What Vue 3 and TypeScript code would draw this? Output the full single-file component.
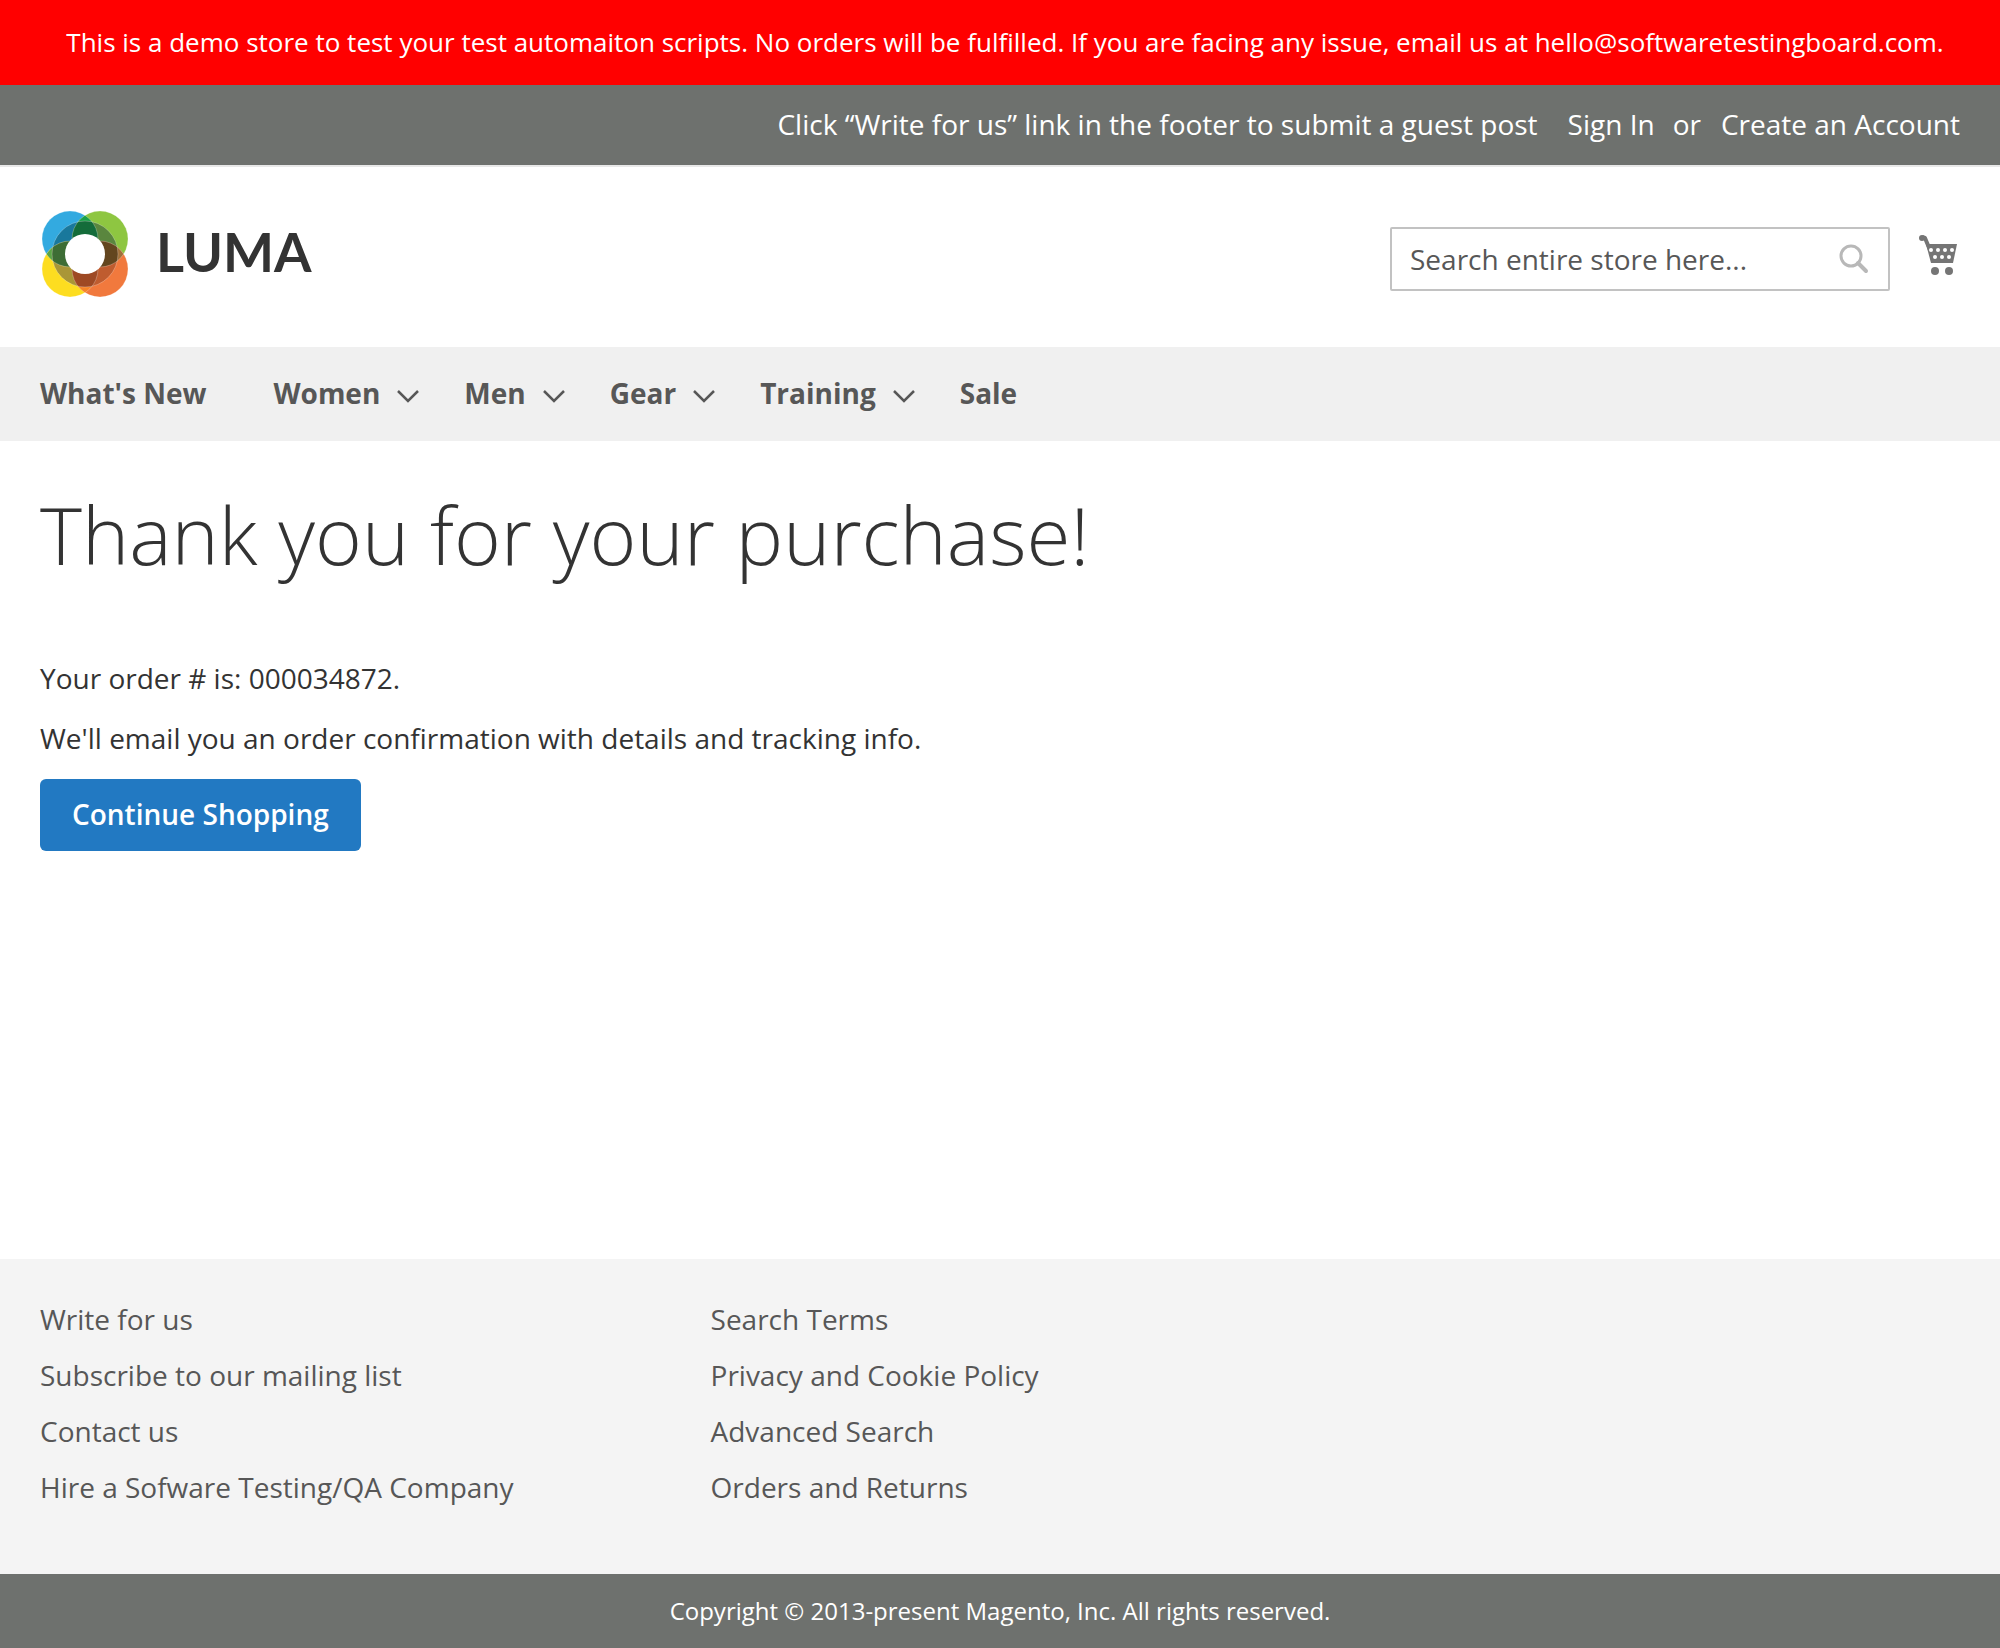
<script setup lang="ts">
interface NavItem {
  label: string
  hasMenu: boolean
}

const navItems: NavItem[] = [
  { label: "What's New", hasMenu: false },
  { label: 'Women', hasMenu: true },
  { label: 'Men', hasMenu: true },
  { label: 'Gear', hasMenu: true },
  { label: 'Training', hasMenu: true },
  { label: 'Sale', hasMenu: false },
]

const footerColumns: string[][] = [
  ['Write for us', 'Subscribe to our mailing list', 'Contact us', 'Hire a Sofware Testing/QA Company'],
  ['Search Terms', 'Privacy and Cookie Policy', 'Advanced Search', 'Orders and Returns'],
]
</script>

<template>
  <div class="page">
    <div class="notice">
      This is a demo store to test your test automaiton scripts. No orders will be fulfilled. If you are facing any issue, email us at hello@softwaretestingboard.com.
    </div>

    <header>
      <div class="panel">
        <span class="welcome">Click “Write for us” link in the footer to submit a guest post</span>
        <a href="#">Sign In</a>
        <span class="or">or</span>
        <a href="#">Create an Account</a>
      </div>

      <div class="masthead">
        <a href="#" class="logo" aria-label="Luma home">
          <svg class="mark" width="88" height="88" viewBox="0 0 88 88" aria-hidden="true">
            <defs>
              <clipPath id="blue"><circle cx="30" cy="29" r="28" /></clipPath>
              <clipPath id="orange"><circle cx="60" cy="59" r="28" /></clipPath>
              <clipPath id="ring"><circle cx="45" cy="44" r="33" /></clipPath>
            </defs>
            <circle cx="30" cy="29" r="28" fill="#33aae0" />
            <circle cx="60" cy="29" r="28" fill="#8ec641" />
            <circle cx="30" cy="59" r="28" fill="#fddd20" />
            <circle cx="60" cy="59" r="28" fill="#f1793d" />
            <g clip-path="url(#blue)">
              <circle cx="60" cy="29" r="28" fill="#1ba04a" />
              <circle cx="30" cy="59" r="28" fill="#5ba345" />
            </g>
            <g clip-path="url(#orange)">
              <circle cx="60" cy="29" r="28" fill="#a0703a" />
              <circle cx="30" cy="59" r="28" fill="#f58428" />
            </g>
            <g clip-path="url(#ring)">
              <circle cx="30" cy="29" r="28" fill="#19789c" />
              <circle cx="60" cy="29" r="28" fill="#5a863e" />
              <circle cx="30" cy="59" r="28" fill="#a99637" />
              <circle cx="60" cy="59" r="28" fill="#bf5c2f" />
              <g clip-path="url(#blue)">
                <circle cx="60" cy="29" r="28" fill="#146c3a" />
                <circle cx="30" cy="59" r="28" fill="#3d6d35" />
              </g>
              <g clip-path="url(#orange)">
                <circle cx="60" cy="29" r="28" fill="#63461f" />
                <circle cx="30" cy="59" r="28" fill="#9e4924" />
              </g>
            </g>
            <g fill="none" stroke="#fff" stroke-opacity="0.25">
              <circle cx="45" cy="44" r="33" />
              <circle cx="30" cy="29" r="28" />
              <circle cx="60" cy="29" r="28" />
              <circle cx="30" cy="59" r="28" />
              <circle cx="60" cy="59" r="28" />
            </g>
            <circle cx="45" cy="44" r="20" fill="#fff" />
          </svg>
          <span class="wordmark">LUMA</span>
        </a>

        <div class="tools">
          <form class="search" role="search" @submit.prevent>
            <input type="text" placeholder="Search entire store here..." aria-label="Search" />
            <button type="submit" aria-label="Search">
              <svg width="32" height="32" viewBox="0 0 32 32" fill="none" stroke="#b8b8b8" aria-hidden="true">
                <circle cx="13" cy="13" r="10" stroke-width="3" />
                <path d="M20 20 L28 28" stroke-width="4" stroke-linecap="round" />
              </svg>
            </button>
          </form>
          <a href="#" class="cart" aria-label="My Cart">
            <svg width="40" height="42" viewBox="0 0 40 42" aria-hidden="true">
              <path d="M4 4 L7 5 L12 17" fill="none" stroke="#757575" stroke-width="4" stroke-linejoin="round" />
              <circle cx="4" cy="5" r="3" fill="#757575" />
              <path d="M8 11 H39 L35 30 H13 Z" fill="#757575" />
              <g fill="#fff">
                <circle cx="13" cy="17" r="2" /><circle cx="20" cy="17" r="2" /><circle cx="27" cy="17" r="2" /><circle cx="34" cy="17" r="2" />
                <circle cx="17" cy="24" r="2" /><circle cx="24" cy="24" r="2" /><circle cx="31" cy="24" r="2" />
              </g>
              <circle cx="17" cy="38" r="4" fill="#757575" />
              <circle cx="31" cy="38" r="4" fill="#757575" />
            </svg>
          </a>
        </div>
      </div>
    </header>

    <nav class="nav" aria-label="Main">
      <a v-for="item in navItems" :key="item.label" href="#" :class="{ plain: !item.hasMenu }">
        {{ item.label }}
        <svg v-if="item.hasMenu" width="24" height="20" viewBox="0 0 24 20" fill="none" stroke="#575757" stroke-width="2.500" aria-hidden="true">
          <path d="M2 8 L12 18 L22 8" />
        </svg>
      </a>
    </nav>

    <main>
      <h1>Thank you for your purchase!</h1>
      <p>Your order # is: <span>000034872</span>.</p>
      <p>We'll email you an order confirmation with details and tracking info.</p>
      <button type="button" class="primary">Continue Shopping</button>
    </main>

    <footer>
      <div class="links">
        <ul v-for="(column, index) in footerColumns" :key="index">
          <li v-for="link in column" :key="link"><a href="#">{{ link }}</a></li>
        </ul>
      </div>
      <small class="copyright">Copyright © 2013-present Magento, Inc. All rights reserved.</small>
    </footer>
  </div>
</template>

<style>
body {
  margin: 0;
  background: #fff;
}
</style>

<style scoped>
.page {
  display: flex;
  flex-direction: column;
  min-height: 100vh;
  font-family: 'Open Sans', 'Noto Sans', sans-serif;
  font-size: 28px;
  line-height: 40px;
  color: #333;
}

a {
  color: inherit;
  text-decoration: none;
}

.notice {
  padding: 22px 40px 23px 50px;
  background: #f00;
  color: #fff;
  font-size: 26px;
  text-align: center;
}

.panel {
  display: flex;
  justify-content: flex-end;
  padding: 19px 40px 21px;
  border-bottom: 2px solid #e8e8e8;
  background: #6e716e;
  color: #fff;
}

.welcome {
  margin-right: 30px;
}

.or {
  margin: 0 20px 0 18px;
}

.masthead {
  display: flex;
  justify-content: space-between;
  align-items: flex-start;
  box-sizing: border-box;
  height: 180px;
  padding: 43px 42px 0 40px;
}

.logo {
  display: flex;
  align-items: center;
  gap: 28px;
}

.wordmark {
  padding-bottom: 4px;
  font-family: Lato, sans-serif;
  font-size: 54px;
  font-weight: 700;
}

.tools {
  display: flex;
  gap: 28px;
  padding-top: 17px;
}

.search {
  display: flex;
  align-items: center;
  box-sizing: border-box;
  width: 500px;
  height: 64px;
  border: 2px solid #c2c2c2;
  border-radius: 2px;
}

.search input {
  flex: 1;
  min-width: 0;
  padding: 0 0 0 18px;
  border: 0;
  outline: 0;
  background: none;
  font: inherit;
  color: #575757;
}

.search input::placeholder {
  color: #575757;
  opacity: 1;
}

.search button {
  display: flex;
  padding: 0 18px;
  border: 0;
  background: none;
}

.cart {
  display: flex;
  padding-top: 6px;
}

.nav {
  display: flex;
  gap: 44px;
  padding: 26px 40px 28px;
  background: #f0f0f0;
  color: #575757;
  font-weight: 700;
}

.nav a {
  display: flex;
  align-items: center;
  gap: 16px;
}

.nav .plain {
  margin-right: 23px;
}

main {
  flex: 1;
  padding: 0 40px;
}

h1 {
  margin: 49px 0 80px;
  font-size: 80px;
  font-weight: 300;
  line-height: 88px;
}

p {
  margin: 0 0 20px;
}

.primary {
  margin-top: 1px;
  padding: 15px 32px 17px;
  border: 0;
  border-radius: 6px;
  background: #2279c2;
  color: #fff;
  font: inherit;
  font-weight: 600;
}

footer {
  background: #f4f4f4;
  color: #575757;
}

.links {
  display: flex;
  gap: 197px;
  padding: 40px 40px 51px;
}

ul {
  margin: 0;
  padding: 0;
  list-style: none;
}

li {
  margin-bottom: 16px;
}

.copyright {
  display: block;
  padding: 17px 40px;
  background: #6e716e;
  color: #fff;
  font-size: 24px;
  text-align: center;
}
</style>
